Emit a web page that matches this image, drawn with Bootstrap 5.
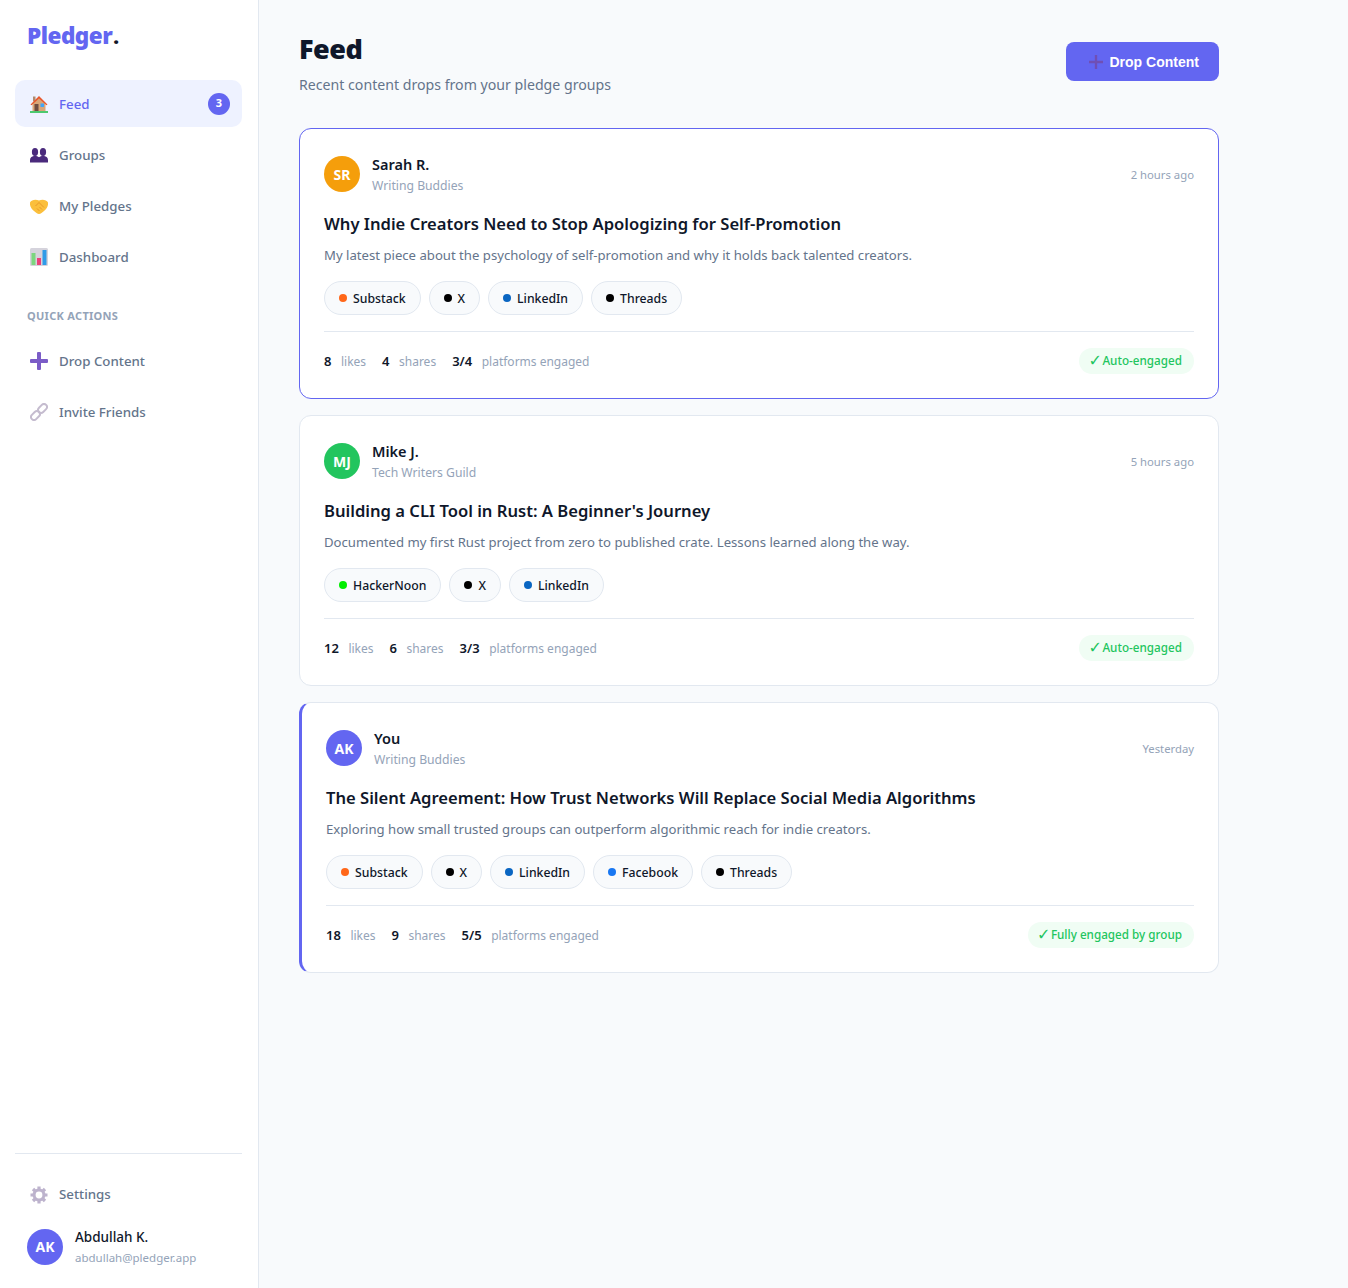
<!DOCTYPE html>
<html lang="en">
<head>
    <meta charset="UTF-8">
    <meta name="viewport" content="width=device-width, initial-scale=1.0">
    <title>Feed - Pledger</title>
    <link href="https://cdn.jsdelivr.net/npm/bootstrap@5.3.0/dist/css/bootstrap.min.css" rel="stylesheet">
    <style>
        body {
            background-color: #f8fafc;
            font-family: 'Noto Sans', 'Liberation Sans', sans-serif;
            color: #0f172a;
            margin: 0;
        }
        .app-shell { min-height: 1288px; }
        .side-panel {
            width: 259px;
            flex: 0 0 259px;
            background-color: #fff;
            border-right: 1px solid #e2e8f0;
            padding: 24px 16px 20px 15px;
        }
        .brand {
            font-size: 22.5px;
            font-weight: 900;
            letter-spacing: -0.5px;
            line-height: 24px;
            color: #6366f1;
            padding: 0 12px;
            margin-bottom: 31px;
        }
        .brand span { color: #0f172a; font-size: 20px; margin-left: 1px; }
        .menu-link {
            display: flex;
            align-items: center;
            gap: 11px;
            height: 47px;
            margin-bottom: 4px;
            padding: 2px 12px 0 15px;
            border-radius: 10px;
            font-size: 13.3px;
            font-weight: 500;
            color: #64748b;
            text-decoration: none;
        }
        .menu-link.is-active { background-color: #eef2ff; color: #6366f1; }
        .menu-link svg { width: 18px; height: 18px; flex: none; margin-top: -2px; }
        .menu-count {
            width: 22px;
            height: 22px;
            border-radius: 50%;
            background-color: #6366f1;
            color: #fff;
            font-size: 11px;
            font-weight: 700;
            display: flex;
            align-items: center;
            justify-content: center;
            margin: -2px 0 0 auto;
        }
        .menu-label {
            font-size: 11px;
            font-weight: 700;
            letter-spacing: 0.3px;
            color: #94a3b8;
            text-transform: uppercase;
            padding: 0 12px;
            margin: 25px 0 14px;
            line-height: 14px;
        }
        .side-foot { border-top: 1px solid #e2e8f0; padding-top: 17px; }
        .side-foot .menu-link { margin-bottom: 0; padding-top: 0; }
        .side-foot .menu-link svg { margin-top: 0; }
        .me-row { display: flex; align-items: center; gap: 12px; padding: 7px 12px 0; }
        .face {
            width: 36px;
            height: 36px;
            flex: none;
            border-radius: 50%;
            color: #fff;
            font-size: 14px;
            font-weight: 700;
            display: flex;
            align-items: center;
            justify-content: center;
        }
        .face-indigo { background-color: #6366f1; }
        .face-amber { background-color: #f59e0b; }
        .face-green { background-color: #22c55e; }
        .person { font-size: 13.5px; font-weight: 500; line-height: 21px; color: #0f172a; padding-top: 2px; }
        .person-sub { font-size: 11.5px; line-height: 20px; color: #94a3b8; }
        .page-area { flex: 1; padding: 28px 40px; min-width: 0; }
        .page-inner { width: 920px; }
        .page-head { margin-bottom: 33px; }
        .page-title { font-size: 27px; font-weight: 900; letter-spacing: -0.5px; line-height: 42px; margin: 0 0 4px; }
        .page-sub { font-size: 14.15px; line-height: 21px; color: #64748b; margin: 0; }
        .drop-btn {
            display: flex;
            align-items: center;
            gap: 6.5px;
            width: 153px;
            height: 39px;
            padding: 1px 0 0 23px;
            border: 0;
            border-radius: 8px;
            background-color: #6366f1;
            color: #fff;
            font-family: 'Liberation Sans', sans-serif;
            font-size: 14px;
            font-weight: 700;
        }
        .drop-btn svg { width: 14px; height: 14px; }
        .feed-card {
            background-color: #fff;
            border: 1px solid #e2e8f0;
            border-radius: 12px;
            padding: 24px;
            margin-bottom: 16px;
        }
        .feed-card.is-new { border-color: #6366f1; }
        .feed-card.is-mine { border-left: 3px solid #6366f1; }
        .post-time { font-size: 11.3px; color: #94a3b8; margin-left: auto; padding-top: 2px; }
        .post-name { font-size: 14.5px; font-weight: 600; line-height: 23px; }
        .post-group { font-size: 12.2px; line-height: 19px; color: #94a3b8; }
        .post-title { font-size: 16.6px; font-weight: 600; line-height: 26px; margin: 16px 0 8px; color: #0f172a; }
        .post-text { font-size: 13.15px; line-height: 20px; color: #64748b; margin: 0 0 16px; }
        .chip {
            display: inline-flex;
            align-items: center;
            gap: 6px;
            height: 34px;
            padding: 2px 14px 0;
            border: 1px solid #e2e8f0;
            border-radius: 17px;
            background-color: #f8fafc;
            font-size: 12.25px;
            font-weight: 500;
        }
        .chip i { width: 8px; height: 8px; border-radius: 50%; display: block; margin-top: -2px; }
        .post-foot { border-top: 1px solid #e2e8f0; margin-top: 16px; padding-top: 16px; font-size: 12px; color: #94a3b8; }
        .post-foot b { color: #0f172a; font-size: 13px; font-weight: 600; margin-right: 9.5px; }
        .tally { margin-right: 16px; padding-top: 2px; }
        .engaged {
            margin-left: auto;
            height: 26px;
            padding: 0 12px;
            border-radius: 13px;
            background-color: #f0fdf4;
            color: #22c55e;
            font-size: 11.7px;
            font-weight: 500;
            display: flex;
            align-items: center;
        }
        .engaged span { font-family: 'DejaVu Sans', sans-serif; font-size: 16px; width: 14px; margin-left: -3px; }
    </style>
</head>
<body>
    <div class="app-shell d-flex">
        <aside class="side-panel d-flex flex-column">
            <div class="brand">Pledger<span>.</span></div>
            <nav>
                <a class="menu-link is-active" href="#">
                    <svg viewBox="0 0 18 18"><rect x="3" y="1.500" width="2.500" height="5" fill="#b08a6e"/><path d="M2.500 8 9 3l6.500 5v8h-13z" fill="#d9a577"/><path d="M.5 9.500 9 1l8.500 8.500-1 .8L9 3.500 1.500 10.300z" fill="#e8562a"/><rect x="4.500" y="9" width="4" height="7" fill="#6d4c41"/><rect x="10.500" y="8.500" width="3.500" height="3.500" fill="#42a5f5"/><rect y="16" width="18" height="2" fill="#4cc96f"/></svg>
                    Feed<span class="menu-count">3</span>
                </a>
                <a class="menu-link" href="#">
                    <svg viewBox="0 0 18 18" fill="#4a2a7c"><ellipse cx="5" cy="6" rx="3.100" ry="4"/><ellipse cx="13" cy="6" rx="3.100" ry="4"/><path d="M0 16.500v-2.500c0-2.500 2-3.800 5-4.200 1.600.2 3 .7 4 1.500 1-.8 2.400-1.300 4-1.500 3 .4 5 1.700 5 4.200v2.500z"/></svg>
                    Groups
                </a>
                <a class="menu-link" href="#">
                    <svg viewBox="0 0 18 18"><path d="M0 5.500C1.500 2.500 6 2 9 3.500c3-1.500 7.500-1 9 2 .5 3.500-1.500 6.500-4 8.500-1.500 1.500-3.500 3-5 3s-3.500-1.500-5-3c-2.500-2-4.500-5-4-8.500z" fill="#fbbf3c"/><path d="M5.500 9 9 5.500l5 5M7 11.500l2.500 2.500M9.500 10l2.500 2.500" fill="none" stroke="#e9982a" stroke-width="1"/></svg>
                    My Pledges
                </a>
                <a class="menu-link" href="#">
                    <svg viewBox="0 0 18 18"><rect width="18" height="18" rx="1.500" fill="#d5d3dc"/><rect x="1.500" y="5" width="4" height="12" fill="#7cd67f"/><rect x="7" y="10" width="4" height="7" fill="#ec407a"/><rect x="12.500" y="2" width="4" height="15" fill="#2f9be8"/></svg>
                    Dashboard
                </a>
            </nav>
            <div class="menu-label">Quick Actions</div>
            <nav>
                <a class="menu-link" href="#">
                    <svg viewBox="0 0 18 18"><path d="M7 1q0-1 1-1h2q1 0 1 1v6h6q1 0 1 1v2q0 1-1 1h-6v6q0 1-1 1H8q-1 0-1-1v-6H1q-1 0-1-1V8q0-1 1-1h6z" fill="#7b5cc7"/></svg>
                    Drop Content
                </a>
                <a class="menu-link" href="#">
                    <svg viewBox="0 0 18 18" fill="none" stroke="#c5bccf" stroke-width="2"><rect x="-5.500" y="-3" width="10" height="6" rx="3" transform="translate(5.800 12.200) rotate(-45)"/><rect x="-4.500" y="-3" width="10" height="6" rx="3" transform="translate(12.200 5.800) rotate(-45)"/></svg>
                    Invite Friends
                </a>
            </nav>
            <div class="side-foot mt-auto">
                <a class="menu-link" href="#">
                    <svg viewBox="0 0 18 18"><circle cx="9" cy="9" r="6.500" fill="#bdb3cd"/><g stroke="#bdb3cd" stroke-width="3.200"><path d="M9 .5v17M.5 9h17M3 3l12 12M15 3 3 15"/></g><circle cx="9" cy="9" r="3.400" fill="#fff"/></svg>
                    Settings
                </a>
                <div class="me-row">
                    <div class="face face-indigo">AK</div>
                    <div>
                        <div class="person">Abdullah K.</div>
                        <div class="person-sub">abdullah@pledger.app</div>
                    </div>
                </div>
            </div>
        </aside>

        <main class="page-area">
            <div class="page-inner">
                <div class="page-head d-flex justify-content-between align-items-center">
                    <div>
                        <h1 class="page-title">Feed</h1>
                        <p class="page-sub">Recent content drops from your pledge groups</p>
                    </div>
                    <button class="drop-btn" type="button">
                        <svg viewBox="0 0 18 18"><path d="M7.500 0h3v7.500H18v3h-7.500V18h-3v-7.500H0v-3h7.500z" fill="#6f4fb5"/></svg>
                        Drop Content
                    </button>
                </div>

                <article class="feed-card is-new">
                    <div class="d-flex align-items-center gap-2">
                        <div class="face face-amber me-1">SR</div>
                        <div>
                            <div class="post-name">Sarah R.</div>
                            <div class="post-group">Writing Buddies</div>
                        </div>
                        <div class="post-time">2 hours ago</div>
                    </div>
                    <h2 class="post-title">Why Indie Creators Need to Stop Apologizing for Self-Promotion</h2>
                    <p class="post-text">My latest piece about the psychology of self-promotion and why it holds back talented creators.</p>
                    <div class="d-flex gap-2">
                        <span class="chip"><i style="background:#ff6719"></i>Substack</span>
                        <span class="chip"><i style="background:#000"></i>X</span>
                        <span class="chip"><i style="background:#0a66c2"></i>LinkedIn</span>
                        <span class="chip"><i style="background:#000"></i>Threads</span>
                    </div>
                    <div class="post-foot d-flex align-items-center">
                        <span class="tally"><b>8</b>likes</span>
                        <span class="tally"><b>4</b>shares</span>
                        <span class="tally"><b>3/4</b>platforms engaged</span>
                        <div class="engaged"><span>✓</span> Auto-engaged</div>
                    </div>
                </article>

                <article class="feed-card">
                    <div class="d-flex align-items-center gap-2">
                        <div class="face face-green me-1">MJ</div>
                        <div>
                            <div class="post-name">Mike J.</div>
                            <div class="post-group">Tech Writers Guild</div>
                        </div>
                        <div class="post-time">5 hours ago</div>
                    </div>
                    <h2 class="post-title">Building a CLI Tool in Rust: A Beginner's Journey</h2>
                    <p class="post-text">Documented my first Rust project from zero to published crate. Lessons learned along the way.</p>
                    <div class="d-flex gap-2">
                        <span class="chip"><i style="background:#00ee00"></i>HackerNoon</span>
                        <span class="chip"><i style="background:#000"></i>X</span>
                        <span class="chip"><i style="background:#0a66c2"></i>LinkedIn</span>
                    </div>
                    <div class="post-foot d-flex align-items-center">
                        <span class="tally"><b>12</b>likes</span>
                        <span class="tally"><b>6</b>shares</span>
                        <span class="tally"><b>3/3</b>platforms engaged</span>
                        <div class="engaged"><span>✓</span> Auto-engaged</div>
                    </div>
                </article>

                <article class="feed-card is-mine">
                    <div class="d-flex align-items-center gap-2">
                        <div class="face face-indigo me-1">AK</div>
                        <div>
                            <div class="post-name">You</div>
                            <div class="post-group">Writing Buddies</div>
                        </div>
                        <div class="post-time">Yesterday</div>
                    </div>
                    <h2 class="post-title">The Silent Agreement: How Trust Networks Will Replace Social Media Algorithms</h2>
                    <p class="post-text">Exploring how small trusted groups can outperform algorithmic reach for indie creators.</p>
                    <div class="d-flex gap-2">
                        <span class="chip"><i style="background:#ff6719"></i>Substack</span>
                        <span class="chip"><i style="background:#000"></i>X</span>
                        <span class="chip"><i style="background:#0a66c2"></i>LinkedIn</span>
                        <span class="chip"><i style="background:#1877f2"></i>Facebook</span>
                        <span class="chip"><i style="background:#000"></i>Threads</span>
                    </div>
                    <div class="post-foot d-flex align-items-center">
                        <span class="tally"><b>18</b>likes</span>
                        <span class="tally"><b>9</b>shares</span>
                        <span class="tally"><b>5/5</b>platforms engaged</span>
                        <div class="engaged"><span>✓</span> Fully engaged by group</div>
                    </div>
                </article>
            </div>
        </main>
    </div>
    <script src="https://cdn.jsdelivr.net/npm/bootstrap@5.3.0/dist/js/bootstrap.bundle.min.js"></script>
</body>
</html>
